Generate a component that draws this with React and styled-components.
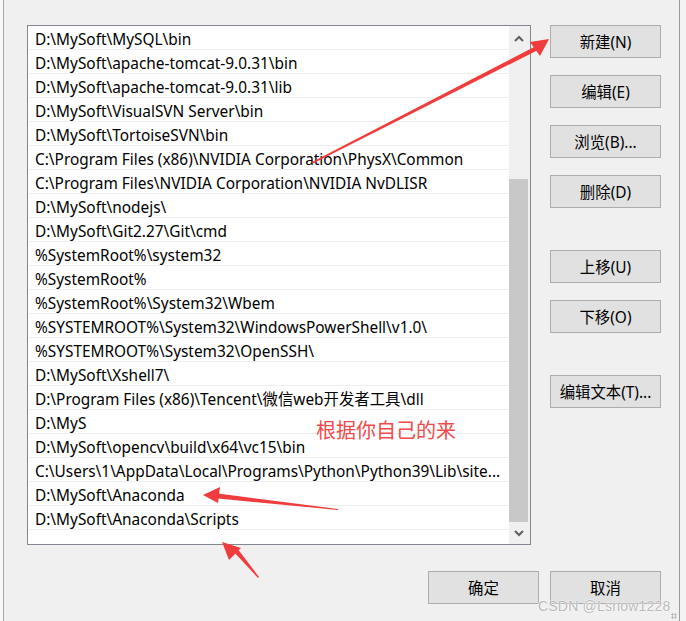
import React from "react";
import styled, { createGlobalStyle } from "styled-components";

const GlobalStyle = createGlobalStyle`
  html, body { margin: 0; padding: 0; background: #f0f0f0; }
  body { font-family: "Noto Sans", "Noto Sans CJK SC", sans-serif; }
`;

const Page = styled.div`
  position: relative;
  width: 686px;
  height: 621px;
  display: flex;
  background: #f0f0f0;
  overflow: hidden;
`;

const LeftEdge = styled.div`
  width: 3px;
  background: #f7f7f7;
  border-right: 1px solid #a8a8a8;
`;

const RightEdge = styled.div`
  width: 6px;
  background: #f3f3f3;
  border-left: 1px solid #9a9a9a;
`;

const Main = styled.div`
  flex: 1;
  display: flex;
  flex-direction: column;
  padding: 25px 18px 0 23px;
`;

const Top = styled.div`
  display: flex;
  gap: 19px;
`;

const ListBox = styled.div`
  width: 502px;
  height: 518px;
  border: 1px solid #828790;
  background: #fff;
  display: flex;
`;

const Rows = styled.div`
  flex: 1;
  min-width: 0;
  display: flex;
  flex-direction: column;
  padding-left: 1px;
`;

const Row = styled.div`
  height: 20px;
  line-height: 21px;
  padding: 3px 2px 0 6px;
  border-bottom: 1px solid #efefef;
  font-size: 15.4px;
  color: #000;
  white-space: nowrap;
  overflow: hidden;
`;

const Scrollbar = styled.div`
  width: 21px;
  background: #f0f0f0;
  display: flex;
  flex-direction: column;
`;

const ScrollBtn = styled.div`
  height: ${(p) => p.$h}px;
  display: flex;
  align-items: center;
  justify-content: center;
  padding-right: 1px;
`;

const Track = styled.div`
  flex: 1;
  display: flex;
  flex-direction: column;
  justify-content: flex-end;
`;

const Thumb = styled.div`
  height: 343px;
  width: 19px;
  background: #c8c8c8;
`;

const ButtonCol = styled.div`
  display: flex;
  flex-direction: column;
  width: 111px;
`;

const Button = styled.button`
  width: 111px;
  height: 33px;
  margin-top: ${(p) => p.$gap || 0}px;
  background: #e1e1e1;
  border: 1px solid #adadad;
  border-radius: 0;
  font-family: "Noto Sans", "Noto Sans CJK SC", sans-serif;
  font-size: 15.4px;
  color: #000;
  padding: 0;
  display: flex;
  align-items: center;
  justify-content: center;
`;

const Bottom = styled.div`
  display: flex;
  justify-content: flex-end;
  gap: 11px;
  margin-top: 26px;
`;

const Overlay = styled.svg`
  position: absolute;
  left: 0;
  top: 0;
  pointer-events: none;
`;

const Note = styled.div`
  position: absolute;
  left: 316px;
  top: 416px;
  font-family: "Noto Sans CJK SC", sans-serif;
  font-size: 20px;
  color: #f04a4a;
  line-height: 28px;
`;

const Watermark = styled.div`
  position: absolute;
  left: 538px;
  top: 598px;
  font-family: "Liberation Sans", Arial, sans-serif;
  font-size: 14px;
  letter-spacing: 0.2px;
  color: #b9b9b9;
  text-shadow: 0 0 2px #fff, 0 0 1px #fff;
`;

const Grip = styled.div`
  position: absolute;
  right: 9px;
  bottom: 2px;
  width: 6px;
  height: 6px;
  background:
    radial-gradient(circle, #c0c0c0 1px, transparent 1.2px) 0 0 / 3px 3px;
`;

const paths = [
  "D:\\MySoft\\MySQL\\bin",
  "D:\\MySoft\\apache-tomcat-9.0.31\\bin",
  "D:\\MySoft\\apache-tomcat-9.0.31\\lib",
  "D:\\MySoft\\VisualSVN Server\\bin",
  "D:\\MySoft\\TortoiseSVN\\bin",
  "C:\\Program Files (x86)\\NVIDIA Corporation\\PhysX\\Common",
  "C:\\Program Files\\NVIDIA Corporation\\NVIDIA NvDLISR",
  "D:\\MySoft\\nodejs\\",
  "D:\\MySoft\\Git2.27\\Git\\cmd",
  "%SystemRoot%\\system32",
  "%SystemRoot%",
  "%SystemRoot%\\System32\\Wbem",
  "%SYSTEMROOT%\\System32\\WindowsPowerShell\\v1.0\\",
  "%SYSTEMROOT%\\System32\\OpenSSH\\",
  "D:\\MySoft\\Xshell7\\",
  "D:\\Program Files (x86)\\Tencent\\微信web开发者工具\\dll",
  "D:\\MyS",
  "D:\\MySoft\\opencv\\build\\x64\\vc15\\bin",
  "C:\\Users\\1\\AppData\\Local\\Programs\\Python\\Python39\\Lib\\site...",
  "D:\\MySoft\\Anaconda",
  "D:\\MySoft\\Anaconda\\Scripts",
];

const Chevron = ({ up }) => (
  <svg width="10" height="7" viewBox="0 0 10 7">
    <path
      d={up ? "M1 6 L5 2 L9 6" : "M1 1 L5 5 L9 1"}
      fill="none"
      stroke="#606060"
      strokeWidth="2"
    />
  </svg>
);

const red = "#f03c3c";

export default function App() {
  return (
    <>
      <GlobalStyle />
      <Page>
        <LeftEdge />
        <Main>
          <Top>
            <ListBox>
              <Rows>
                {paths.map((p) => (
                  <Row key={p}>{p}</Row>
                ))}
              </Rows>
              <Scrollbar>
                <ScrollBtn $h={24}>
                  <Chevron up />
                </ScrollBtn>
                <Track>
                  <Thumb />
                </Track>
                <ScrollBtn $h={22}>
                  <Chevron />
                </ScrollBtn>
              </Scrollbar>
            </ListBox>
            <ButtonCol>
              <Button>新建(N)</Button>
              <Button $gap={17}>编辑(E)</Button>
              <Button $gap={17}>浏览(B)...</Button>
              <Button $gap={17}>删除(D)</Button>
              <Button $gap={42}>上移(U)</Button>
              <Button $gap={17}>下移(O)</Button>
              <Button $gap={42}>编辑文本(T)...</Button>
            </ButtonCol>
          </Top>
          <Bottom>
            <Button>确定</Button>
            <Button>取消</Button>
          </Bottom>
        </Main>
        <RightEdge />
        <Overlay width="686" height="621" viewBox="0 0 686 621">
          <polygon points="312,162 536,46 538,50 313,163.5" fill={red} />
          <polygon points="549,39 530,42 540,56" fill={red} />
          <polygon points="338,509 214,493 213,498 338,510" fill={red} />
          <polygon points="203,495 220,487 218,503" fill={red} />
          <polygon points="258,578 233,551 237,548 259,577" fill={red} />
          <polygon points="222,542 241,548 229,560" fill={red} />
        </Overlay>
        <Note>根据你自己的来</Note>
        <Watermark>CSDN @Lsnow1228</Watermark>
        <Grip />
      </Page>
    </>
  );
}
